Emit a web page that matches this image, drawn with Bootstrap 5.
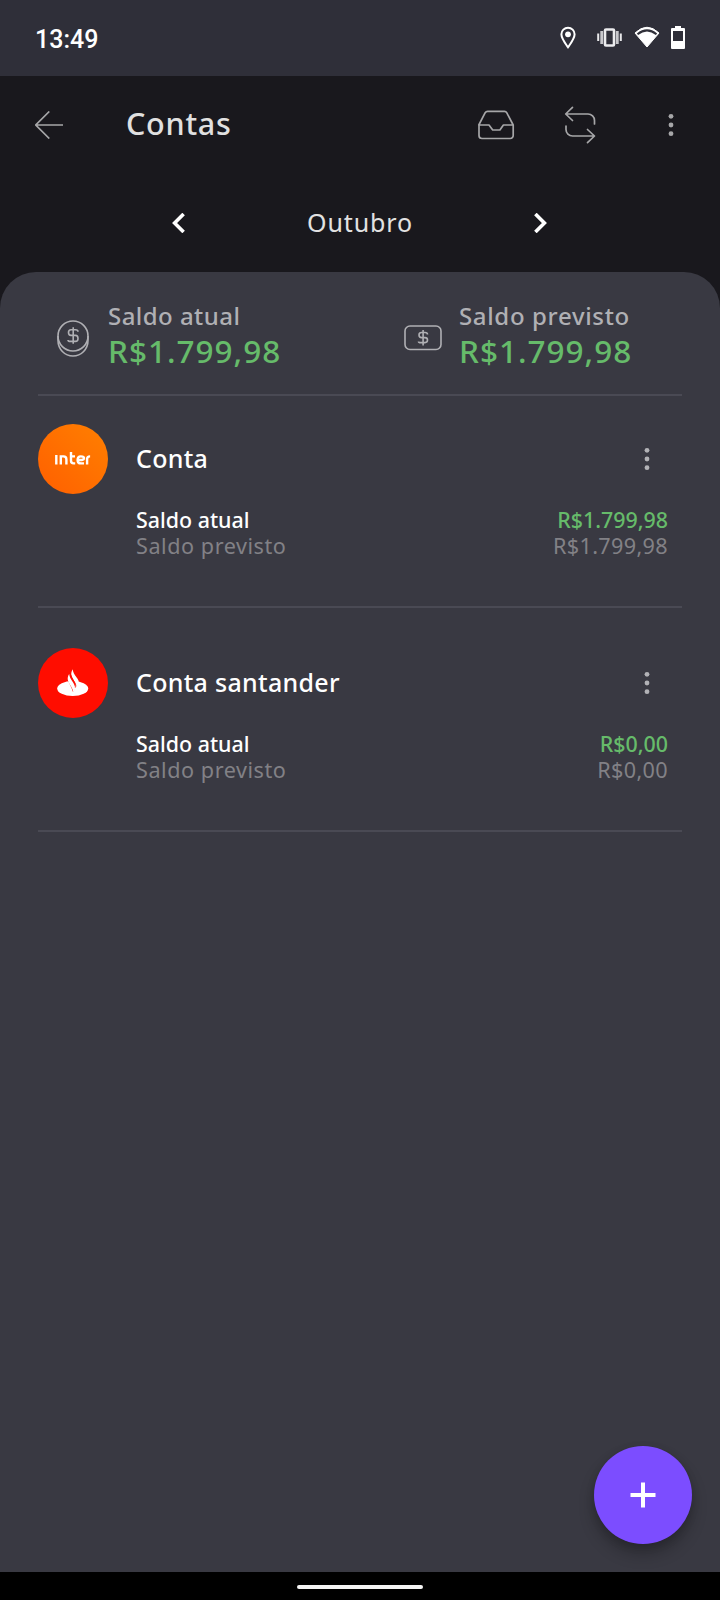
<!DOCTYPE html>
<html lang="pt-BR">
<head>
<meta charset="utf-8">
<meta name="viewport" content="width=device-width, initial-scale=1">
<title>Contas</title>
<link href="https://cdn.jsdelivr.net/npm/bootstrap@5.3.0/dist/css/bootstrap.min.css" rel="stylesheet">
<style>
  body { background: #19181d; color: #fff; font-family: "Noto Sans", sans-serif; height: 1600px; overflow: hidden; }
  svg { display: block; flex: none; }
  .screen { width: 720px; height: 1600px; }
  .status-bar { height: 76px; background: #2f2f39; padding: 0 34px 0 35px; }
  .clock { font: 500 25px/28px Roboto, sans-serif; padding-top: 4px; }
  .toolbar { height: 97px; padding: 0 41px 0 35px; color: #a6a6a8; }
  .page-title { font-weight: 500; font-size: 30.5px; line-height: 40px; letter-spacing: .75px; color: #e0e0e0; margin: 0 0 3px 63px; }
  .month-row { height: 99px; padding: 0 173px 0 172px; }
  .month-name { font-size: 25px; line-height: 32px; letter-spacing: .9px; color: #e2e2e2; margin: 0 0 2px 1px; }
  .panel { background: #393942; border-radius: 36px 36px 0 0; padding: 0 38px; }
  .summary { height: 124px; border-bottom: 2px solid #4a4a54; color: #b0b0b4; }
  .summary-now { padding: 29px 0 0 19px; }
  .summary-expected { padding: 29px 0 0 44px; }
  .coin { margin: 19px 19px 0 0; }
  .bill { margin: 24px 17px 0 0; }
  .summary-label { font-weight: 500; font-size: 24px; line-height: 30px; letter-spacing: .65px; }
  .summary-now .summary-label { letter-spacing: .45px; }
  .summary-value { font-weight: 500; font-size: 31.5px; line-height: 40px; letter-spacing: 1px; color: #66bb6a; }
  .account { border-bottom: 2px solid #4a4a54; }
  .account-first { height: 212px; padding-top: 28px; }
  .account-next { height: 224px; padding-top: 40px; }
  .account-name { font-weight: 500; font-size: 25px; line-height: 34px; letter-spacing: .3px; margin-bottom: 2px; }
  .bank-logo { width: 70px; height: 70px; margin-right: 28px; }
  .more { margin-right: 32px; }
  .balances { padding: 13px 14px 0 98px; font-size: 21.6px; line-height: 26px; }
  .now { font-weight: 500; font-size: 21.4px; }
  .expected { color: #828186; letter-spacing: .55px; }
  .expected .amount { letter-spacing: .35px; }
  .green { color: #66bb6a; }
  .fab { width: 98px; height: 98px; right: 28px; bottom: 28px; background: #7c4dff; border: 0; box-shadow: 0 10px 16px rgba(0,0,0,.24), 0 3px 8px rgba(0,0,0,.12); }
  .nav-strip { height: 28px; background: #000; padding-top: 2px; }
  .home-pill { width: 126px; height: 4px; background: #f5f5f5; }
</style>
</head>
<body>
<div class="screen d-flex flex-column">
  <div class="status-bar d-flex align-items-center justify-content-between">
    <span class="clock">13:49</span>
    <svg width="130" height="28" viewBox="556 24 130 28" fill="none" stroke="#fff">
      <path d="M568 47.3C565 43 561.4 38.500 561.400 34.300a6.600 6.600 0 0 1 13.200 0C574.600 38.500 571 43 568 47.300Z" stroke-width="2"/>
      <circle cx="568" cy="34.300" r="2.900" fill="#fff" stroke="none"/>
      <rect x="605" y="29.500" width="9" height="16" rx="1" stroke="#ececee" stroke-width="2.600"/>
      <path d="M601.700 31v13M617.300 31v13" stroke="#c8c8cc" stroke-width="2.800"/>
      <path d="M598.200 33.500v7.500M620.800 33.500v7.500" stroke="#e8e8ea" stroke-width="2"/>
      <path d="M635 33Q647 21.500 659 33L647 47Z" fill="#fff" stroke-width="1"/>
      <path d="M637.500 34.300Q647 26.500 656.500 34.300" stroke="#2f2f39" stroke-width="2"/>
      <path d="M675 26h6v2h3a1 1 0 0 1 1 1v19a1 1 0 0 1-1 1h-12a1 1 0 0 1-1-1V29a1 1 0 0 1 1-1h3ZM673 31v10h10V31Z" fill="#fff" fill-rule="evenodd" stroke="none"/>
    </svg>
  </div>

  <header class="toolbar d-flex align-items-center">
    <svg width="28" height="28" viewBox="0 0 28 28" fill="none" stroke="currentColor" stroke-width="1.700"><path d="M28 14H1M14.300 .500.800 14l13.500 13.500"/></svg>
    <h1 class="page-title">Contas</h1>
    <svg class="ms-auto" width="202" height="40" viewBox="477 105 202 40" fill="none" stroke="currentColor" stroke-width="1.700" stroke-linejoin="round" stroke-linecap="round">
      <path d="M478.800 125 485.200 112.700Q486 111.400 487.500 111.400H504.500Q506 111.400 506.700 112.700L513.200 125V135.500a3 3 0 0 1-3 3H482a3 3 0 0 1-3-3V125H489l3.700 5h7.200l3.500-5h9.600"/>
      <path d="M572.500 107.300 565.700 114l6.800 6.500M566 114h22a6.500 6.500 0 0 1 6.500 6.500V124M566 126v3.500a6.500 6.500 0 0 0 6.500 6.500H594M587.500 129.500l7 6.500-7 6.700"/>
      <g fill="currentColor" stroke="none"><circle cx="671" cy="116.300" r="2.400"/><circle cx="671" cy="125" r="2.400"/><circle cx="671" cy="133.700" r="2.400"/></g>
    </svg>
  </header>

  <nav class="month-row d-flex align-items-center justify-content-between">
    <svg width="13" height="20" viewBox="0 0 13 20" fill="none" stroke="#fff" stroke-width="3.600"><path d="M11.600 1 2.600 10l9 9"/></svg>
    <span class="month-name">Outubro</span>
    <svg width="13" height="20" viewBox="0 0 13 20" fill="none" stroke="#fff" stroke-width="3.600"><path d="m1.400 1 9 9-9 9"/></svg>
  </nav>

  <main class="panel flex-grow-1 position-relative">
    <section class="summary row gx-0">
      <div class="summary-now col-6 d-flex">
        <svg class="coin" width="32" height="37" viewBox="57 319 32 37" fill="none" stroke="currentColor" stroke-width="1.600">
          <circle cx="73" cy="335" r="15"/><path d="M58 335v4.500a15 15.500 0 0 0 30 0V335"/>
          <path d="M78 331.500q0-2-2.500-2H71q-2.500 0-2.500 2.800t2.500 2.900h4.500q2.500 0 2.500 3t-2.500 3h-5q-2.500 0-2.500-1.500M73.200 327v16.500" transform="translate(0 -.8)"/>
        </svg>
        <div><div class="summary-label">Saldo atual</div><div class="summary-value">R$1.799,98</div></div>
      </div>
      <div class="summary-expected col-6 d-flex">
        <svg class="bill" width="38" height="26" viewBox="404 325 38 26" fill="none" stroke="currentColor" stroke-width="1.600">
          <rect x="405" y="326" width="36" height="23.500" rx="5"/>
          <path d="M427.500 334.500q0-2-2.500-2h-3.500q-2.500 0-2.500 2.500t2.500 2.600h3.500q2.500 0 2.500 2.500t-2.500 2.500h-4q-2.500 0-2.500-1.200M423.100 330v15.500"/>
        </svg>
        <div><div class="summary-label">Saldo previsto</div><div class="summary-value">R$1.799,98</div></div>
      </div>
    </section>

    <section class="account account-first">
      <div class="d-flex align-items-center">
        <svg class="bank-logo" viewBox="0 0 70 70">
          <defs><linearGradient id="interFill" x1="0" y1="1" x2="1" y2="0"><stop offset=".15" stop-color="#ff6400"/><stop offset=".85" stop-color="#ff7b00"/></linearGradient></defs>
          <circle cx="35" cy="35" r="35" fill="url(#interFill)"/>
          <path d="M18.300 31v9.500M22.800 40.500V32.400h2.700q2.900 0 2.900 3v5.100M33 28v8.800q0 2.600 2.600 2.600h1.600M32 32.400h5M46 39.400h-3.200q-3.200 0-3.200-3.500t3.200-3.500q3.200 0 3.200 1.700t-2.200 1.900h-3.700M49.100 40.500V35q0-2.600 3-2.600" fill="none" stroke="#fff" stroke-width="2.400"/>
        </svg>
        <span class="account-name">Conta</span>
        <svg class="more ms-auto" width="6" height="24" viewBox="0 0 6 24" fill="#b2b2b6"><circle cx="3" cy="3.300" r="2.400"/><circle cx="3" cy="12" r="2.400"/><circle cx="3" cy="20.700" r="2.400"/></svg>
      </div>
      <div class="balances">
        <div class="now d-flex justify-content-between"><span>Saldo atual</span><span class="green">R$1.799,98</span></div>
        <div class="expected d-flex justify-content-between"><span>Saldo previsto</span><span class="amount">R$1.799,98</span></div>
      </div>
    </section>

    <section class="account account-next">
      <div class="d-flex align-items-center">
        <svg class="bank-logo" viewBox="0 0 70 70">
          <circle cx="35" cy="35" r="35" fill="#ff0d00"/>
          <ellipse cx="34.700" cy="40.500" rx="15.500" ry="7.600" fill="#fff"/>
          <path d="M29.500 31.500h11.500v3l-1 4.500-5 5-1.500-4Z" fill="#ff0d00"/>
          <path d="M34.700 21.200c.2 3 1.700 5 3.400 7.500 2.200 3 3.300 5 3.300 8.300l-1.200 5-4.200 2 .4-5c1.800-1.500 1.300-3.500-.6-6.500-2.800-4.500-3.400-7.500-1.100-11.300Z" fill="#fff"/>
          <path d="M31.200 25.900c.2 3 1.600 5 3.400 7.800 2.800 4.300 3.500 7.500.8 10.700-.3-2.700-1.600-4.700-3.400-7.700-2.500-4-3.200-7.200-.8-10.800Z" fill="#fff"/>
          <path d="M32.700 27c1 3 3.300 6 4.500 8.500.7 1.500.7 3 .1 4" fill="none" stroke="#ff0d00" stroke-width="1"/>
        </svg>
        <span class="account-name">Conta santander</span>
        <svg class="more ms-auto" width="6" height="24" viewBox="0 0 6 24" fill="#b2b2b6"><circle cx="3" cy="3.300" r="2.400"/><circle cx="3" cy="12" r="2.400"/><circle cx="3" cy="20.700" r="2.400"/></svg>
      </div>
      <div class="balances">
        <div class="now d-flex justify-content-between"><span>Saldo atual</span><span class="green">R$0,00</span></div>
        <div class="expected d-flex justify-content-between"><span>Saldo previsto</span><span class="amount">R$0,00</span></div>
      </div>
    </section>

    <button class="fab position-absolute rounded-circle d-flex align-items-center justify-content-center p-0" type="button" aria-label="Adicionar">
      <svg width="26" height="26" viewBox="0 0 26 26" stroke="#fff" stroke-width="4"><path d="M13 .500v25M.500 13h25"/></svg>
    </button>
  </main>

  <footer class="nav-strip d-flex align-items-center justify-content-center"><div class="home-pill rounded-pill"></div></footer>
</div>
<script src="https://cdn.jsdelivr.net/npm/bootstrap@5.3.0/dist/js/bootstrap.bundle.min.js"></script>
</body>
</html>
